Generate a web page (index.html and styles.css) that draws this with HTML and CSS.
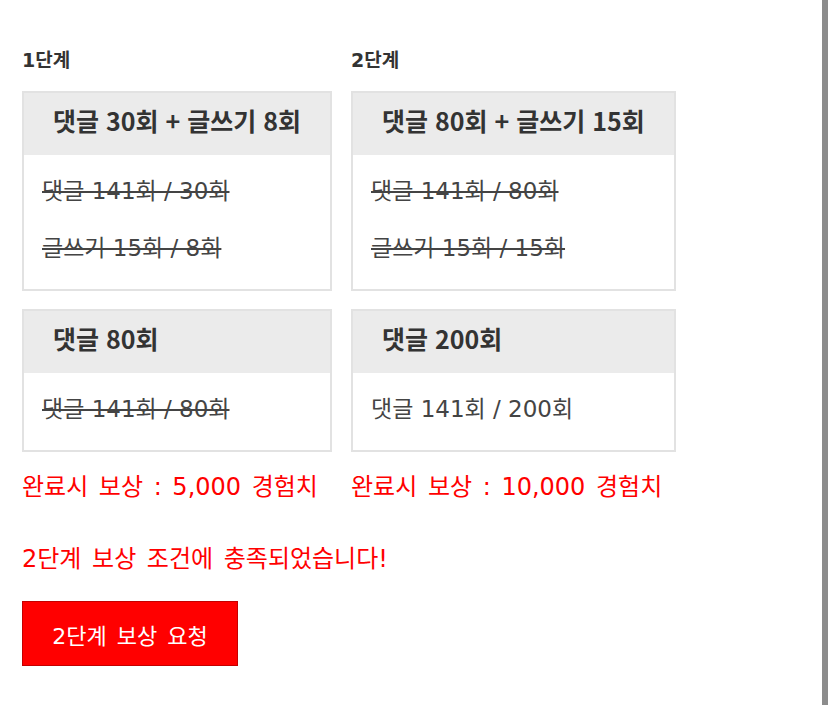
FILE: index.html
```html
<!DOCTYPE html>
<html lang="ko">
<head>
<meta charset="utf-8">
<title>보상 단계</title>
<link rel="stylesheet" href="styles.css">
</head>
<body>
<div class="page">
  <main class="main">
    <div class="stages">
      <section class="stage">
        <div class="stage-label">1단계</div>
        <div class="card">
          <div class="card-head">댓글 30회 + 글쓰기 8회</div>
          <div class="card-body">
            <div class="line done">댓글 141회 / 30회</div>
            <div class="line done">글쓰기 15회 / 8회</div>
          </div>
        </div>
        <div class="card">
          <div class="card-head">댓글 80회</div>
          <div class="card-body">
            <div class="line done">댓글 141회 / 80회</div>
          </div>
        </div>
        <div class="reward">완료시 보상 : 5,000 경험치</div>
      </section>
      <section class="stage">
        <div class="stage-label">2단계</div>
        <div class="card">
          <div class="card-head">댓글 80회 + 글쓰기 15회</div>
          <div class="card-body">
            <div class="line done">댓글 141회 / 80회</div>
            <div class="line done">글쓰기 15회 / 15회</div>
          </div>
        </div>
        <div class="card">
          <div class="card-head">댓글 200회</div>
          <div class="card-body">
            <div class="line">댓글 141회 / 200회</div>
          </div>
        </div>
        <div class="reward">완료시 보상 : 10,000 경험치</div>
      </section>
    </div>
    <p class="notice">2단계 보상 조건에 충족되었습니다!</p>
    <button class="claim" type="button">2단계 보상 요청</button>
  </main>
  <div class="side-bar"></div>
</div>
</body>
</html>
```
FILE: styles.css
```css
html, body {
  margin: 0;
  padding: 0;
  height: 100%;
  overflow: hidden;
  background: #ffffff;
}
body {
  font-family: "DejaVu Sans", "Noto Sans CJK KR", sans-serif;
  color: #333333;
}
.page {
  display: flex;
  height: 100vh;
}
.main {
  flex: 1;
  padding: 45px 0 0 22px;
  display: flex;
  flex-direction: column;
  align-items: flex-start;
}
.side-bar {
  width: 6px;
  background: #8c8c8c;
  margin-right: 7px;
  height: 100%;
}
.stages {
  display: flex;
  gap: 19px;
  align-items: flex-start;
}
.stage {
  display: flex;
  flex-direction: column;
}
.stage-label {
  font-size: 19px;
  font-weight: 700;
  line-height: 30px;
  color: #333333;
  margin-bottom: 16px;
}
.card {
  border: 2px solid #e2e2e2;
  background: #ffffff;
  margin-bottom: 18px;
}
.card + .card {
  margin-bottom: 0;
}
.card-head {
  box-sizing: border-box;
  background: #ebebeb;
  height: 62px;
  line-height: 54px;
  padding: 0 29px 8px;
  font-family: "Noto Sans CJK KR", "Noto Sans", sans-serif;
  font-size: 25px;
  font-weight: 700;
  color: #333333;
  white-space: nowrap;
}
.card-body {
  padding: 8px 18px 12px;
}
.line {
  font-size: 23px;
  line-height: 57px;
  color: #444444;
  white-space: nowrap;
}
.line.done {
  text-decoration: line-through;
}
.reward {
  margin-top: 20px;
  font-size: 24px;
  word-spacing: 3px;
  line-height: 30px;
  color: #ff0000;
  white-space: nowrap;
}
.notice {
  margin: 42px 0 0;
  font-size: 24px;
  word-spacing: 3px;
  line-height: 30px;
  color: #ff0000;
}
.claim {
  margin-top: 27px;
  width: 216px;
  height: 65px;
  background: #ff0000;
  border: 1px solid #c40000;
  color: #ffffff;
  font-family: "DejaVu Sans", "Noto Sans CJK KR", sans-serif;
  font-size: 22px;
  word-spacing: 3px;
  padding: 0;
  cursor: pointer;
}
```
